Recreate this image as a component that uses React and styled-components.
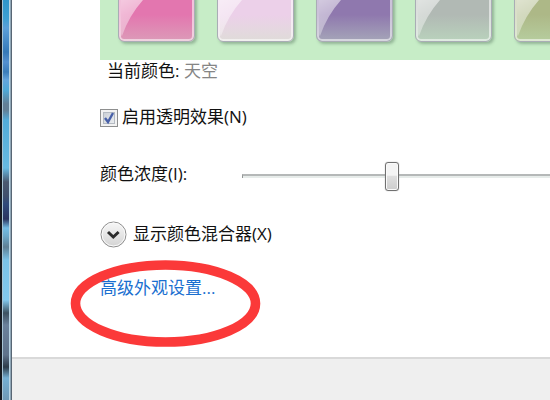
import React, { useState } from 'react';
import styled, { createGlobalStyle } from 'styled-components';

const GlobalStyle = createGlobalStyle`
  * {
    box-sizing: border-box;
  }

  body {
    margin: 0;
    overflow: hidden;
    background: #fff;
    color: #111;
    font-family: 'Open Sans', 'Noto Sans CJK SC', sans-serif;
    font-size: 17px;
    line-height: 22px;
  }
`;

const Window = styled.div`
  display: flex;
  min-height: 100vh;
`;

const Frame = styled.div`
  flex: none;
  width: 12px;
  border-left: 2px solid #15191f;
  border-right: 1px solid #596775;
  background: linear-gradient(
    #2f95cb 0,
    #3d9fd2 18px,
    #5b9fd9 28px,
    #3579b8 52px,
    #5490d0 62px,
    #3b7dba 72px,
    #64a5de 80px,
    #4fa9d8 90px,
    #627f96 104px,
    #627f96 110px,
    #52abd9 120px,
    #67b9e1 168px,
    #4a5970 182px,
    #40506c 196px,
    #2f4a7b 204px,
    #2a3560 219px,
    #72bce4 228px,
    #6ba9cb 236px,
    #5f7f94 247px,
    #7ac1e6 260px,
    #82c8ed 300px,
    #3d5261 313px,
    #6a819b 325px,
    #5f738b 355px,
    #2d3c4a 367px,
    #74afd3 378px,
    #7099b5 400px
  );
  box-shadow: inset 1px 0 #a8c5d6, inset -1px 0 #8fa6b6, inset -2px 0 #b9d6e6;
`;

const Page = styled.div`
  display: flex;
  flex: 1;
  flex-direction: column;
  min-width: 0;
`;

const Content = styled.main`
  position: relative;
  display: flex;
  flex-direction: column;
  align-items: flex-start;
  padding: 0 0 58px 88px;
  overflow: hidden;
`;

const SwatchStrip = styled.div`
  display: flex;
  align-items: flex-end;
  align-self: stretch;
  gap: 22px;
  height: 60px;
  padding: 0 18px 18px;
  background: #c7edc7;
  overflow: hidden;
`;

const Swatch = styled.button`
  flex: none;
  width: 77px;
  height: 77px;
  padding: 0;
  border: 1px solid #a9adb5;
  border-radius: 6px;
  background: ${({ $color, $base }) => `linear-gradient(${$color} 65%, ${$base})`};
  box-shadow: inset 0 0 0 2px rgba(255, 255, 255, 0.55), 2px 2px 3px rgba(70, 100, 80, 0.4);
  overflow: hidden;

  svg {
    display: block;
  }
`;

const CurrentColor = styled.p`
  margin: 0 0 23px 7px;

  span {
    color: #858585;
  }
`;

const CheckRow = styled.label`
  display: flex;
  align-items: center;
  gap: 4px;
  height: 23px;
  margin-bottom: 31px;
`;

const CheckBox = styled.span`
  display: grid;
  margin-top: 3px;

  input,
  svg {
    grid-area: 1 / 1;
    width: 18px;
    height: 18px;
    margin: 0;
  }

  input {
    appearance: none;
    border: 1px solid #8e8f8f;
    background: linear-gradient(135deg, #c3c8d0, #f2f4f6);
    box-shadow: inset 0 0 0 2px #f2f2f2, inset 0 0 0 3px #b4bac2;
  }

  svg {
    pointer-events: none;
  }

  input:not(:checked) + svg {
    display: none;
  }
`;

const SliderRow = styled.div`
  display: flex;
  align-items: center;
  height: 30px;
  margin-bottom: 31px;

  label {
    width: 142px;
  }
`;

const Slider = styled.input`
  appearance: none;
  flex: none;
  width: 398px;
  height: 30px;
  margin: 4px 0 0;
  background: transparent;

  &::-webkit-slider-runnable-track {
    height: 4px;
    border-top: 2px solid #b5b8b8;
    border-left: 1px solid #929595;
    background: #e7ecea;
  }

  &::-webkit-slider-thumb {
    appearance: none;
    width: 14px;
    height: 29px;
    margin-top: -14px;
    border: 1px solid #707070;
    border-radius: 3px;
    background: linear-gradient(#f4f4f4 45%, #dedede 50%, #cdcdcd);
    box-shadow: inset 0 0 0 1px #fafafa, 0 0 1px #888;
  }
`;

const MixerButton = styled.button`
  display: flex;
  align-items: center;
  gap: 6px;
  height: 28px;
  margin-bottom: 29px;
  padding: 0;
  border: 0;
  background: none;
  color: inherit;
  font: inherit;
`;

const SettingsLink = styled.a`
  color: #1a6fd0;
  text-decoration: none;

  &:hover {
    text-decoration: underline;
  }
`;

const LinkHighlight = styled.div`
  position: relative;

  svg {
    position: absolute;
    top: -18px;
    left: -30px;
    pointer-events: none;
  }
`;

const Footer = styled.footer`
  flex: 1;
  border-top: 2px solid #d9d9d9;
  background: #efefef;
`;

const colors = [
  { name: '粉红', color: '#e376af', base: '#dc9bb8' },
  { name: '浅紫', color: '#ecd0e9', base: '#dfdcd9' },
  { name: '紫色', color: '#8f78ae', base: '#a5a5b8' },
  { name: '灰色', color: '#b1b9b4', base: '#b9d2bc' },
  { name: '橄榄', color: '#adb887', base: '#b6cd9e' },
];

const Gloss = ({ id }) => (
  <svg width="75" height="75" viewBox="0 0 75 75" aria-hidden="true">
    <defs>
      <linearGradient id={id} x1="0" y1="0" x2="0.5" y2="1">
        <stop offset="0" stopColor="#fff" stopOpacity="0.85" />
        <stop offset="1" stopColor="#fff" stopOpacity="0.2" />
      </linearGradient>
    </defs>
    <path d="M2 2H68Q18 26 3 70Q2 70 2 66Z" fill={`url(#${id})`} />
  </svg>
);

export default function App() {
  const [transparent, setTransparent] = useState(true);
  const [intensity, setIntensity] = useState(37);

  return (
    <>
      <GlobalStyle />
      <Window>
        <Frame />
        <Page>
          <Content>
            <SwatchStrip>
              {colors.map(({ name, color, base }, i) => (
                <Swatch key={name} type="button" aria-label={name} $color={color} $base={base}>
                  <Gloss id={`gloss-${i}`} />
                </Swatch>
              ))}
            </SwatchStrip>
            <CurrentColor>
              当前颜色: <span>天空</span>
            </CurrentColor>
            <CheckRow>
              <CheckBox>
                <input
                  type="checkbox"
                  checked={transparent}
                  onChange={(e) => setTransparent(e.target.checked)}
                />
                <svg viewBox="0 0 18 18" aria-hidden="true">
                  <path d="M5 9L8 13L13 4" fill="none" stroke="#4860a8" strokeWidth="2.4" />
                </svg>
              </CheckBox>
              启用透明效果(N)
            </CheckRow>
            <SliderRow>
              <label htmlFor="intensity">颜色浓度(I):</label>
              <Slider
                id="intensity"
                type="range"
                value={intensity}
                onChange={(e) => setIntensity(Number(e.target.value))}
              />
            </SliderRow>
            <MixerButton type="button">
              <svg width="27" height="27" viewBox="0 0 27 27" aria-hidden="true">
                <defs>
                  <linearGradient id="knob" x1="0" y1="0" x2="0" y2="1">
                    <stop offset="0" stopColor="#f7f7f7" />
                    <stop offset="0.5" stopColor="#e6e6e6" />
                    <stop offset="1" stopColor="#d2d2d2" />
                  </linearGradient>
                </defs>
                <circle cx="13.5" cy="13.5" r="12.5" fill="url(#knob)" stroke="#8d8d8d" />
                <circle cx="13.5" cy="13.5" r="11.4" fill="none" stroke="#fafafa" />
                <path d="M8 11L13.3 16L18.6 11" fill="none" stroke="#2c2c2c" strokeWidth="3" />
              </svg>
              显示颜色混合器(X)
            </MixerButton>
            <LinkHighlight>
              <SettingsLink href="#advanced">高级外观设置...</SettingsLink>
              <svg width="192" height="90" viewBox="0 0 192 90" aria-hidden="true">
                <ellipse cx="95.5" cy="44.5" rx="90" ry="38.5" fill="none" stroke="#fb3939" strokeWidth="9.6" />
              </svg>
            </LinkHighlight>
          </Content>
          <Footer />
        </Page>
      </Window>
    </>
  );
}
